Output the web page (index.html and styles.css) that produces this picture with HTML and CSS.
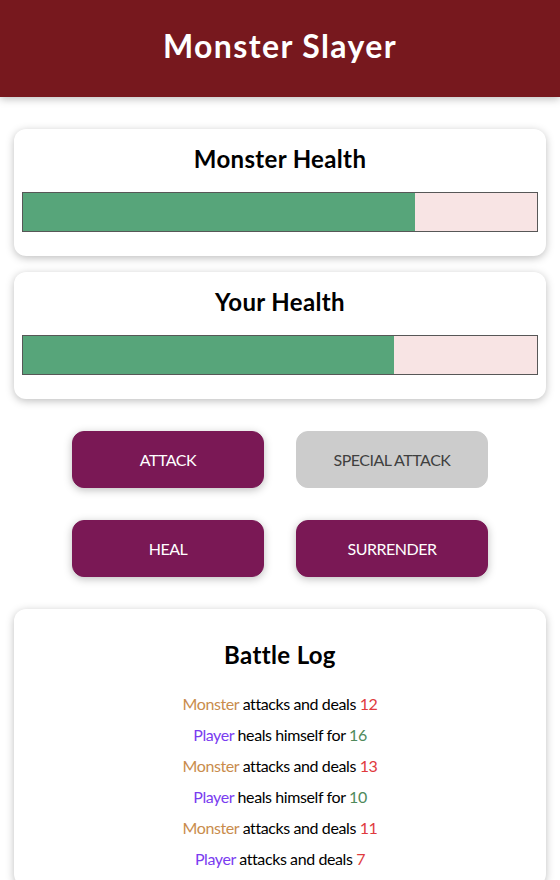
FILE: index.html
```html
<!DOCTYPE html>
<html lang="en">
<head>
<meta charset="utf-8">
<title>Monster Slayer</title>
<link rel="stylesheet" href="styles.css">
</head>
<body>
<header class="top">
  <h1 class="title">Monster Slayer</h1>
</header>
<section class="card">
  <h2 class="card-title">Monster Health</h2>
  <div class="healthbar"><div class="healthbar-value" style="width: 76.2%"></div></div>
</section>
<section class="card">
  <h2 class="card-title">Your Health</h2>
  <div class="healthbar"><div class="healthbar-value" style="width: 72.1%"></div></div>
</section>
<section class="controls">
  <button class="btn">ATTACK</button>
  <button class="btn" disabled>SPECIAL ATTACK</button>
  <button class="btn">HEAL</button>
  <button class="btn">SURRENDER</button>
</section>
<section class="card log">
  <h2 class="log-title">Battle Log</h2>
  <ul class="log-list">
    <li><span class="monster">Monster</span> attacks and deals <span class="damage">12</span></li>
    <li><span class="player">Player</span> heals himself for <span class="heal">16</span></li>
    <li><span class="monster">Monster</span> attacks and deals <span class="damage">13</span></li>
    <li><span class="player">Player</span> heals himself for <span class="heal">10</span></li>
    <li><span class="monster">Monster</span> attacks and deals <span class="damage">11</span></li>
    <li><span class="player">Player</span> attacks and deals <span class="damage">7</span></li>
  </ul>
</section>
</body>
</html>
```

FILE: styles.css
```css
* { box-sizing: border-box; }
html { font-family: "Lato", "Open Sans", sans-serif; }
body { margin: 0; background: #fff; color: #000; }

.top {
  height: 97px;
  background: #77181e;
  color: #fff;
  display: flex;
  align-items: center;
  justify-content: center;
  box-shadow: 0 2px 8px rgba(0,0,0,0.26);
  margin-bottom: 32px;
}
.title {
  margin: 0;
  font-size: 32px;
  font-weight: 700;
  line-height: 46px;
  letter-spacing: 1.4px;
  padding-bottom: 6px;
}

.card {
  margin: 16px 14px;
  padding: 8px;
  border-radius: 12px;
  box-shadow: 0 2px 8px rgba(0,0,0,0.26);
  text-align: center;
  background: #fff;
}
.card-title {
  margin: 4px;
  font-size: 24px;
  line-height: 35px;
  font-weight: 700;
  letter-spacing: 0.35px;
}
.healthbar {
  height: 40px;
  border: 1px solid #575757;
  background: #f8e4e4;
  margin: 16px 0;
}
.healthbar-value {
  height: 100%;
  background: #57a57a;
}

.controls {
  margin: 16px 14px;
  display: flex;
  flex-wrap: wrap;
  justify-content: center;
}
.btn {
  font: inherit;
  font-size: 16px;
  line-height: 23px;
  letter-spacing: -0.5px;
  width: 192px;
  margin: 16px;
  padding: 16px 32px;
  border: 1px solid #7a1855;
  background: #7a1855;
  color: #fff;
  border-radius: 12px;
  box-shadow: 0 2px 8px rgba(0,0,0,0.26);
}
.btn:disabled {
  background: #ccc;
  border-color: #ccc;
  color: #3f3f3f;
  box-shadow: none;
}

.log-title {
  margin: 20px 0;
  font-size: 24px;
  line-height: 35px;
  font-weight: 700;
  letter-spacing: 0.35px;
}
.log-list {
  list-style: none;
  margin: 0;
  padding: 0;
  font-size: 16px;
  line-height: 23px;
  letter-spacing: -0.4px;
}
.log-list li { margin: 8px 0; }
.monster { color: #c98c4c; }
.player { color: #7a3cf0; }
.damage { color: #e03a3e; }
.heal { color: #4f8a5b; }
```
